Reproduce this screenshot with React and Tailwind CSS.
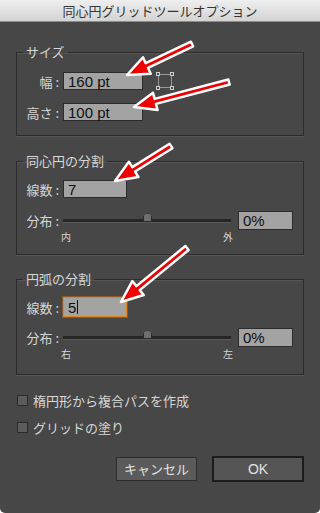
const JP = { fontFamily: '"Noto Sans CJK JP", "Noto Sans", sans-serif' };

function arrowPoints([tx, ty], [px, py]) {
  const len = Math.hypot(px - tx, py - ty);
  const dx = (px - tx) / len;
  const dy = (py - ty) / len;
  const nx = -dy;
  const ny = dx;
  const w = 2.6;
  const hw = 9;
  const hl = 22;
  const hx = px - dx * hl;
  const hy = py - dy * hl;
  const pts = [
    [tx + nx * w, ty + ny * w],
    [hx + nx * w, hy + ny * w],
    [hx + nx * hw, hy + ny * hw],
    [px, py],
    [hx - nx * hw, hy - ny * hw],
    [hx - nx * w, hy - ny * w],
    [tx - nx * w, ty - ny * w],
  ];
  return pts.map((p) => p.map((v) => v.toFixed(1)).join(',')).join(' ');
}

const arrows = [
  [[192, 44], [127, 75]],
  [[229, 82], [134, 107]],
  [[171, 146], [115, 181]],
  [[187, 248], [121, 302]],
];

function Field({ value, className = '', focused = false, caret = false }) {
  return (
    <div
      className={`flex h-[18px] items-center pl-[4px] text-[15px] leading-none text-[#111] ${
        focused ? 'border border-[#e0841e] bg-[#a3a3a3] shadow-[0_0_0_1px_#8a5a2a]' : 'border border-[#2c2c2c] bg-[#a3a3a3]'
      } ${className}`}
      style={{ fontFamily: '"Liberation Sans", Arial, sans-serif' }}
    >
      {value}
      {caret && <span className="ml-[1px] h-[14px] w-px bg-[#111]" />}
    </div>
  );
}

function Label({ children }) {
  return (
    <div className="w-[46px] pr-[4px] text-right text-[13px] leading-none text-[#d6d6d6]" style={JP}>
      {children}
    </div>
  );
}

function Group({ title, children, className = '' }) {
  return (
    <fieldset className={`border border-[#2c2c2c] shadow-[inset_0_1px_0_#555,0_1px_0_#555] ${className}`}>
      <legend className="ml-[6px] px-[3px] text-[13px] leading-[16px] text-[#d6d6d6]" style={JP}>
        {title}
      </legend>
      {children}
    </fieldset>
  );
}

function Slider({ left, right }) {
  return (
    <>
      <div className="flex items-center">
        <Label>分布 :</Label>
        <div className="relative h-[3px] w-[168px] bg-[#262626] shadow-[0_1px_0_#5a5a5a]">
          <div className="absolute left-[80px] top-[-6px] h-[9px] w-[9px] border border-[#2a2a2a] bg-[#6e6e6e] [clip-path:polygon(50%_0,100%_35%,100%_100%,0_100%,0_35%)]" />
        </div>
        <Field value="0%" className="ml-[7px] h-[19px] w-[55px]" />
      </div>
      <div className="mt-[1px] flex justify-between pl-[44px] pr-[70px] text-[10px] leading-[12px] text-[#d6d6d6]" style={JP}>
        <span>{left}</span>
        <span>{right}</span>
      </div>
    </>
  );
}

export default function App() {
  return (
    <div className="relative h-[513px] w-[320px] overflow-hidden bg-white">
      <div className="flex h-full flex-col overflow-hidden rounded-b-[5px] bg-[#474747]">
        <div
          className="flex h-[22px] items-center justify-center border-b border-[#8c8c8c] bg-gradient-to-b from-[#efefef] to-[#d3d3d3] text-[13px] text-[#353535]"
          style={JP}
        >
          同心円グリッドツールオプション
        </div>

        <div className="px-4 pt-[22px]">
          <Group title="サイズ" className="pb-[14px] pt-[12px]">
            <div className="flex items-center">
              <Label>幅 :</Label>
              <Field value="160 pt" className="w-[80px]" />
              <div className="relative ml-[15px] h-[14px] w-[14px] border border-[#9a9a9a]">
                <span className="absolute -left-[3px] -top-[3px] h-[4px] w-[4px] border border-[#cfcfcf] bg-[#474747]" />
                <span className="absolute -right-[3px] -top-[3px] h-[4px] w-[4px] border border-[#cfcfcf] bg-[#474747]" />
                <span className="absolute -bottom-[3px] -left-[3px] h-[4px] w-[4px] border border-[#cfcfcf] bg-[#474747]" />
                <span className="absolute -bottom-[3px] -right-[3px] h-[4px] w-[4px] border border-[#cfcfcf] bg-[#474747]" />
              </div>
            </div>
            <div className="mt-[13px] flex items-center">
              <Label>高さ :</Label>
              <Field value="100 pt" className="w-[80px]" />
            </div>
          </Group>

          <Group title="同心円の分割" className="mt-[17px] pb-[11px] pt-[11px]">
            <div className="flex items-center">
              <Label>線数 :</Label>
              <Field value="7" className="w-[64px]" />
            </div>
            <div className="mt-[13px]">
              <Slider left="内" right="外" />
            </div>
          </Group>

          <Group title="円弧の分割" className="mt-[16px] pb-[14px] pt-[10px]">
            <div className="flex items-center">
              <Label>線数 :</Label>
              <Field value="5" className="h-[20px] w-[64px]" focused caret />
            </div>
            <div className="mt-[11px]">
              <Slider left="右" right="左" />
            </div>
          </Group>

          <div className="mt-[19px] flex flex-col gap-[14px] pl-[1px] text-[13px] leading-none text-[#d6d6d6]" style={JP}>
            <label className="flex items-center gap-[5px]">
              <span className="h-[11px] w-[11px] border border-[#2c2c2c] bg-[#5c5c5c]" />
              楕円形から複合パスを作成
            </label>
            <label className="flex items-center gap-[5px]">
              <span className="h-[11px] w-[11px] border border-[#2c2c2c] bg-[#5c5c5c]" />
              グリッドの塗り
            </label>
          </div>

          <div className="mt-[22px] flex items-center justify-end gap-[15px]">
            <button
              className="h-[24px] w-[81px] border border-[#2c2c2c] bg-[#5b5b5b] text-[13px] text-[#e2e2e2]"
              style={JP}
            >
              キャンセル
            </button>
            <button
              className="h-[26px] w-[92px] border-2 border-[#1c1c1c] bg-[#555] text-[14px] text-[#e2e2e2]"
              style={{ fontFamily: '"Liberation Sans", Arial, sans-serif' }}
            >
              OK
            </button>
          </div>
        </div>
      </div>

      <svg className="pointer-events-none absolute inset-0" width="320" height="513" viewBox="0 0 320 513">
        {arrows.map(([t, p], i) => (
          <polygon
            key={i}
            points={arrowPoints(t, p)}
            fill="#ee0000"
            stroke="#ffffff"
            strokeWidth="2.5"
            strokeLinejoin="round"
          />
        ))}
      </svg>
    </div>
  );
}
